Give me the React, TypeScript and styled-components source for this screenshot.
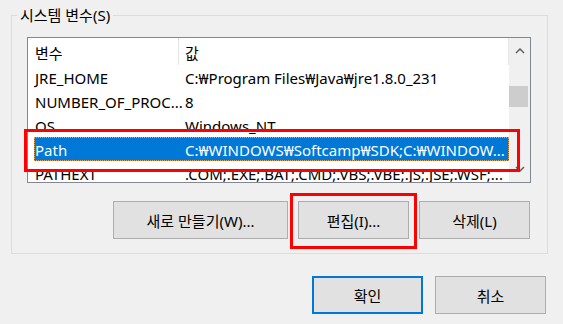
import React from "react";
import styled, { createGlobalStyle } from "styled-components";

const GlobalStyle = createGlobalStyle`
  html, body {
    margin: 0;
    padding: 0;
    background: #f0f0f0;
  }
  body {
    width: 563px;
    height: 324px;
    overflow: hidden;
    font-family: "Noto Sans", "Noto Sans CJK KR", sans-serif;
    font-size: 15px;
    color: #000;
  }
`;

interface IVariable {
  name: string;
  value: string;
}

const variables: IVariable[] = [
  { name: "JRE_HOME", value: "C:₩Program Files₩Java₩jre1.8.0_231" },
  { name: "NUMBER_OF_PROC...", value: "8" },
  { name: "OS", value: "Windows_NT" },
  { name: "Path", value: "C:₩WINDOWS₩Softcamp₩SDK;C:₩WINDOW..." },
  { name: "PATHEXT", value: ".COM;.EXE;.BAT;.CMD;.VBS;.VBE;.JS;.JSE;.WSF;..." },
];

const Chevron: React.FC<{ down?: boolean }> = ({ down }) => (
  <svg width="10" height="6" viewBox="0 0 10 6">
    <path
      d={down ? "M1 1 L5 5 L9 1" : "M1 5 L5 1 L9 5"}
      fill="none"
      stroke="#606060"
      strokeWidth="1.5"
    />
  </svg>
);

const App: React.FC = () => {
  const selected = "Path";

  return (
    <>
      <GlobalStyle />
      <Group>
        <Legend>시스템 변수(S)</Legend>
        <GroupBody>
          <ListFrame>
            <List>
              <ListContent>
                <Header>
                  <HeaderCell>변수</HeaderCell>
                  <HeaderCell>값</HeaderCell>
                </Header>
                {variables.map((v) => (
                  <Row key={v.name} $selected={v.name === selected}>
                    <Cell>{v.name}</Cell>
                    <Cell>{v.value}</Cell>
                  </Row>
                ))}
              </ListContent>
              <ScrollBar>
                <ArrowButton>
                  <Chevron />
                </ArrowButton>
                <Track>
                  <Thumb />
                </Track>
                <ArrowButton>
                  <Chevron down />
                </ArrowButton>
              </ScrollBar>
            </List>
            <RowHighlight />
          </ListFrame>
          <ButtonRow>
            <Button $width={175}>새로 만들기(W)...</Button>
            <Marked>
              <Button $width={111}>편집(I)...</Button>
              <ButtonHighlight />
            </Marked>
            <Button $width={111}>삭제(L)</Button>
          </ButtonRow>
        </GroupBody>
      </Group>
      <DialogButtons>
        <Button $width={111} $default>
          확인
        </Button>
        <Button $width={111}>취소</Button>
      </DialogButtons>
    </>
  );
};

const Group = styled.fieldset`
  margin: 5px 15px 0 11px;
  padding: 0 5px;
  border: 1px solid #dcdcdc;
  min-width: 0;
`;

const Legend = styled.legend`
  padding: 0 3px;
  line-height: 20px;
  font-size: 15px;
`;

const GroupBody = styled.div`
  padding: 12px 11px 14px 10px;
`;

const ListFrame = styled.div`
  position: relative;
`;

const List = styled.div`
  height: 146px;
  box-sizing: border-box;
  border: 1px solid #828790;
  background: #fff;
  display: flex;
  overflow: hidden;
`;

const ListContent = styled.div`
  flex: 1;
  min-width: 0;
`;

const Header = styled.div`
  height: 27px;
  display: grid;
  grid-template-columns: 151px 1fr;
`;

const HeaderCell = styled.div`
  padding: 2px 0 0 6px;
  border-right: 1px solid #e5e5e5;
  display: flex;
  align-items: center;
  white-space: nowrap;

  &:first-child {
    padding-left: 7px;
  }
`;

const Row = styled.div<{ $selected?: boolean }>`
  height: 24px;
  margin-left: 6px;
  display: grid;
  grid-template-columns: 150px 1fr;
  align-items: center;
  box-sizing: border-box;
  background: ${(p) => (p.$selected ? "#0078d7" : "transparent")};
  color: ${(p) => (p.$selected ? "#fff" : "#000")};
  outline: ${(p) => (p.$selected ? "1px dotted #e0a060" : "none")};
  outline-offset: -1px;
`;

const Cell = styled.div`
  padding: 2px 0 0 1px;
  white-space: nowrap;
  overflow: hidden;
`;

const ScrollBar = styled.div`
  width: 21px;
  background: #f0f0f0;
  display: flex;
  flex-direction: column;
`;

const ArrowButton = styled.div`
  height: 26px;
  display: flex;
  align-items: center;
  justify-content: center;
`;

const Track = styled.div`
  flex: 1;
  padding-top: 22px;
`;

const Thumb = styled.div`
  width: 19px;
  height: 21px;
  background: #cdcdcd;
`;

const RowHighlight = styled.div`
  position: absolute;
  left: -3px;
  top: 92px;
  width: 496px;
  height: 43px;
  box-sizing: border-box;
  border: 3px solid #ff0000;
  pointer-events: none;
`;

const ButtonRow = styled.div`
  margin-top: 18px;
  padding-right: 1px;
  display: flex;
  justify-content: flex-end;
  gap: 10px;
`;

const Marked = styled.div`
  position: relative;
`;

const ButtonHighlight = styled.div`
  position: absolute;
  left: -8px;
  top: -8px;
  right: -8px;
  bottom: -10px;
  border: 3px solid #ff0000;
  pointer-events: none;
`;

const Button = styled.button<{ $width: number; $default?: boolean }>`
  width: ${(p) => p.$width}px;
  height: 38px;
  box-sizing: border-box;
  background: #e1e1e1;
  border: ${(p) => (p.$default ? "2px solid #0078d7" : "1px solid #adadad")};
  border-radius: 0;
  padding: 0;
  font-family: "Noto Sans", "Noto Sans CJK KR", sans-serif;
  font-size: 15px;
  color: #000;
  display: block;
`;

const DialogButtons = styled.div`
  margin-top: 22px;
  padding-right: 17px;
  display: flex;
  justify-content: flex-end;
  gap: 12px;
`;

export default App;
